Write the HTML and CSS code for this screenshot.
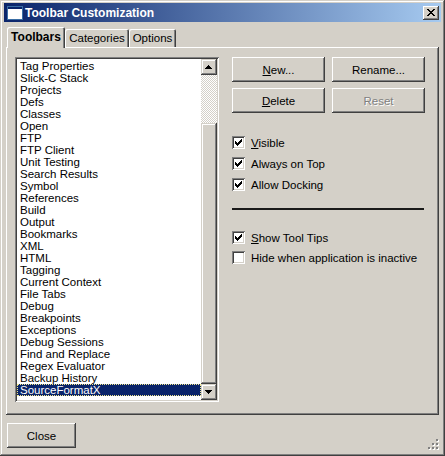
FILE: index.html
```html
<!DOCTYPE html>
<html>
<head>
<meta charset="utf-8">
<link rel="stylesheet" href="styles.css">
</head>
<body>
<div class="window">
  <div class="titlebar">
    <svg class="app-icon" width="16" height="14" viewBox="0 0 16 14" shape-rendering="crispEdges">
      <rect x="0" y="0" width="16" height="14" fill="#fff"/>
      <rect x="0" y="0" width="16" height="3" fill="#0a246a"/>
      <rect x="0.5" y="0.5" width="15" height="13" fill="none" stroke="#3a6ea5"/>
    </svg>
    <span class="title">Toolbar Customization</span>
    <div class="close-x">
      <svg width="16" height="14" viewBox="0 0 16 14" shape-rendering="crispEdges"><path fill="#000" d="M4 3h2v1h-2zM10 3h2v1h-2zM5 4h2v1h-2zM9 4h2v1h-2zM6 5h4v1h-4zM7 6h2v1h-2zM6 7h4v1h-4zM5 8h2v1h-2zM9 8h2v1h-2zM4 9h2v1h-2zM10 9h2v1h-2z"/></svg>
    </div>
  </div>
  <div class="tabs">
    <div class="tab active tab-toolbars">Toolbars</div>
    <div class="tab tab-categories">Categories</div>
    <div class="tab tab-options">Options</div>
  </div>
  <div class="panel">
    <div class="listbox">
      <ul class="items">
        <li>Tag Properties</li>
        <li>Slick-C Stack</li>
        <li>Projects</li>
        <li>Defs</li>
        <li>Classes</li>
        <li>Open</li>
        <li>FTP</li>
        <li>FTP Client</li>
        <li>Unit Testing</li>
        <li>Search Results</li>
        <li>Symbol</li>
        <li>References</li>
        <li>Build</li>
        <li>Output</li>
        <li>Bookmarks</li>
        <li>XML</li>
        <li>HTML</li>
        <li>Tagging</li>
        <li>Current Context</li>
        <li>File Tabs</li>
        <li>Debug</li>
        <li>Breakpoints</li>
        <li>Exceptions</li>
        <li>Debug Sessions</li>
        <li>Find and Replace</li>
        <li>Regex Evaluator</li>
        <li>Backup History</li>
        <li class="selected">SourceFormatX</li>
      </ul>
      <div class="scrollbar">
        <div class="sb-btn">
          <svg width="16" height="16" viewBox="0 0 16 16" shape-rendering="crispEdges"><path fill="#000" d="M7 6h1v1h-1zM6 7h3v1h-3zM5 8h5v1h-5zM4 9h7v1h-7z"/></svg>
        </div>
        <div class="sb-track"></div>
        <div class="sb-thumb"></div>
        <div class="sb-btn">
          <svg width="16" height="16" viewBox="0 0 16 16" shape-rendering="crispEdges"><path fill="#000" d="M4 6h7v1h-7zM5 7h5v1h-5zM6 8h3v1h-3zM7 9h1v1h-1z"/></svg>
        </div>
      </div>
    </div>
    <div class="side">
      <div class="btn-grid">
        <button class="btn"><u>N</u>ew...</button>
        <button class="btn">Rename...</button>
        <button class="btn"><u>D</u>elete</button>
        <button class="btn disabled">Reset</button>
      </div>
      <div class="checks group1">
        <div class="check-row"><span class="box checked"><svg width="13" height="13" viewBox="0 0 13 13" shape-rendering="crispEdges"><path fill="#000" d="M3 5h1v3h-1zM4 6h1v3h-1zM5 7h1v3h-1zM6 6h1v3h-1zM7 5h1v3h-1zM8 4h1v3h-1zM9 3h1v3h-1z"/></svg></span><span class="label"><u>V</u>isible</span></div>
        <div class="check-row"><span class="box checked"><svg width="13" height="13" viewBox="0 0 13 13" shape-rendering="crispEdges"><path fill="#000" d="M3 5h1v3h-1zM4 6h1v3h-1zM5 7h1v3h-1zM6 6h1v3h-1zM7 5h1v3h-1zM8 4h1v3h-1zM9 3h1v3h-1z"/></svg></span><span class="label">Always on Top</span></div>
        <div class="check-row"><span class="box checked"><svg width="13" height="13" viewBox="0 0 13 13" shape-rendering="crispEdges"><path fill="#000" d="M3 5h1v3h-1zM4 6h1v3h-1zM5 7h1v3h-1zM6 6h1v3h-1zM7 5h1v3h-1zM8 4h1v3h-1zM9 3h1v3h-1z"/></svg></span><span class="label">Allow Docking</span></div>
      </div>
      <div class="sep"></div>
      <div class="checks group2">
        <div class="check-row"><span class="box checked"><svg width="13" height="13" viewBox="0 0 13 13" shape-rendering="crispEdges"><path fill="#000" d="M3 5h1v3h-1zM4 6h1v3h-1zM5 7h1v3h-1zM6 6h1v3h-1zM7 5h1v3h-1zM8 4h1v3h-1zM9 3h1v3h-1z"/></svg></span><span class="label"><u>S</u>how Tool Tips</span></div>
        <div class="check-row"><span class="box"></span><span class="label">Hide when application is inactive</span></div>
      </div>
    </div>
  </div>
  <div class="footer">
    <button class="btn close-btn">Close</button>
  </div>
  <svg class="grip" width="12" height="12" viewBox="0 0 12 12" shape-rendering="crispEdges">
    <path fill="#fff" d="M9 1h2v2h-2zM5 5h2v2h-2zM9 5h2v2h-2zM1 9h2v2h-2zM5 9h2v2h-2zM9 9h2v2h-2z"/>
    <path fill="#808080" d="M8 0h2v2h-2zM4 4h2v2h-2zM8 4h2v2h-2zM0 8h2v2h-2zM4 8h2v2h-2zM8 8h2v2h-2z"/>
  </svg>
</div>
</body>
</html>
```
FILE: styles.css
```css
html, body {
  margin: 0;
  padding: 0;
  background: #d4d0c8;
}
body {
  font-family: "Liberation Sans", Arial, sans-serif;
  font-size: 11.5px;
  color: #000;
}
.window {
  position: relative;
  width: 445px;
  height: 456px;
  box-sizing: border-box;
  padding: 3px 4px 4px 4px;
  background: #d4d0c8;
  box-shadow: inset -1px -1px #404040, inset 1px 1px #d4d0c8, inset -2px -2px #808080, inset 2px 2px #fff;
  display: flex;
  flex-direction: column;
}
.titlebar {
  height: 19px;
  flex: none;
  display: flex;
  align-items: center;
  padding: 0 2px 0 3px;
  background: linear-gradient(to right, #0a246a, #a6caf0);
  color: #fff;
  font-weight: bold;
  font-size: 12px;
}
.app-icon {
  display: block;
  flex: none;
}
.title {
  margin-left: 2px;
  flex: 1;
  white-space: nowrap;
}
.close-x {
  width: 16px;
  height: 14px;
  background: #d4d0c8;
  box-shadow: inset -1px -1px #404040, inset 1px 1px #fff, inset -2px -2px #808080, inset 2px 2px #d4d0c8;
}
.close-x svg { display: block; }

.tabs {
  flex: none;
  height: 26px;
  margin-bottom: -1px;
  padding-left: 3px;
  display: flex;
  align-items: flex-end;
  position: relative;
  z-index: 1;
}
.tab {
  box-sizing: border-box;
  height: 18px;
  margin-bottom: 1px;
  padding-top: 3px;
  text-align: center;
  background: #d4d0c8;
  border-radius: 2px 2px 0 0;
  box-shadow: inset 1px 1px #fff, inset -1px 0 #404040, inset -2px 0 #808080;
  white-space: nowrap;
}
.tab.active {
  height: 21px;
  margin-bottom: 0;
  padding-top: 3px;
  font-weight: bold;
  font-size: 12px;
}
.tab-toolbars { width: 58px; }
.tab-categories { width: 64px; }
.tab-options { width: 47px; }

.panel {
  flex: none;
  box-sizing: border-box;
  margin-left: 2px;
  width: 433px;
  height: 368px;
  padding: 10px 0 0 9px;
  background: #d4d0c8;
  box-shadow: inset -1px -1px #404040, inset 1px 1px #fff, inset -2px -2px #808080;
  display: flex;
  gap: 13px;
  align-items: flex-start;
}
.listbox {
  box-sizing: border-box;
  width: 204px;
  height: 345px;
  padding: 2px;
  background: #fff;
  box-shadow: inset 1px 1px #808080, inset -1px -1px #fff, inset 2px 2px #404040, inset -2px -2px #d4d0c8;
  display: flex;
}
.items {
  list-style: none;
  margin: 0;
  padding: 1px 0 0 0;
  flex: 1;
  min-width: 0;
  overflow: hidden;
}
.items li {
  height: 12px;
  line-height: 12px;
  padding-left: 3px;
  white-space: nowrap;
}
.items li.selected {
  background: #0a246a;
  color: #fff;
  outline: 1px dotted #f0e68c;
  outline-offset: -1px;
}
.scrollbar {
  width: 16px;
  flex: none;
  display: flex;
  flex-direction: column;
}
.sb-btn, .sb-thumb {
  background: #d4d0c8;
  box-shadow: inset -1px -1px #404040, inset 1px 1px #d4d0c8, inset -2px -2px #808080, inset 2px 2px #fff;
}
.sb-btn {
  height: 16px;
  flex: none;
}
.sb-btn svg { display: block; }
.sb-track {
  height: 48px;
  flex: none;
  background: repeating-conic-gradient(#fff 0 25%, #d4d0c8 0 50%) 0 0 / 2px 2px;
}
.sb-thumb {
  flex: 1;
}

.side {
  width: 192px;
  display: flex;
  flex-direction: column;
}
.btn-grid {
  display: grid;
  grid-template-columns: 93px 93px;
  column-gap: 7px;
  row-gap: 6px;
}
.btn {
  height: 25px;
  padding: 0;
  border: 0;
  font: inherit;
  color: #000;
  background: #d4d0c8;
  box-shadow: inset -1px -1px #404040, inset 1px 1px #fff, inset -2px -2px #808080, inset 2px 2px #d4d0c8;
}
.btn.disabled {
  color: #808080;
  text-shadow: 1px 1px #fff;
}
.checks {
  display: flex;
  flex-direction: column;
}
.group1 {
  margin-top: 23px;
  gap: 8px;
}
.group2 {
  margin-top: 21px;
  gap: 7px;
}
.check-row {
  height: 13px;
  display: flex;
  align-items: center;
  white-space: nowrap;
}
.box {
  width: 13px;
  height: 13px;
  flex: none;
  background: #fff;
  box-shadow: inset 1px 1px #808080, inset -1px -1px #fff, inset 2px 2px #404040, inset -2px -2px #d4d0c8;
}
.box svg { display: block; }
.label {
  margin-left: 6px;
}
.sep {
  margin-top: 17px;
  height: 2px;
  background: #1a1a1a;
}
.footer {
  flex: none;
  padding: 8px 0 0 3px;
}
.close-btn {
  width: 69px;
  height: 25px;
}
.grip {
  position: absolute;
  right: 5px;
  bottom: 5px;
}
```
